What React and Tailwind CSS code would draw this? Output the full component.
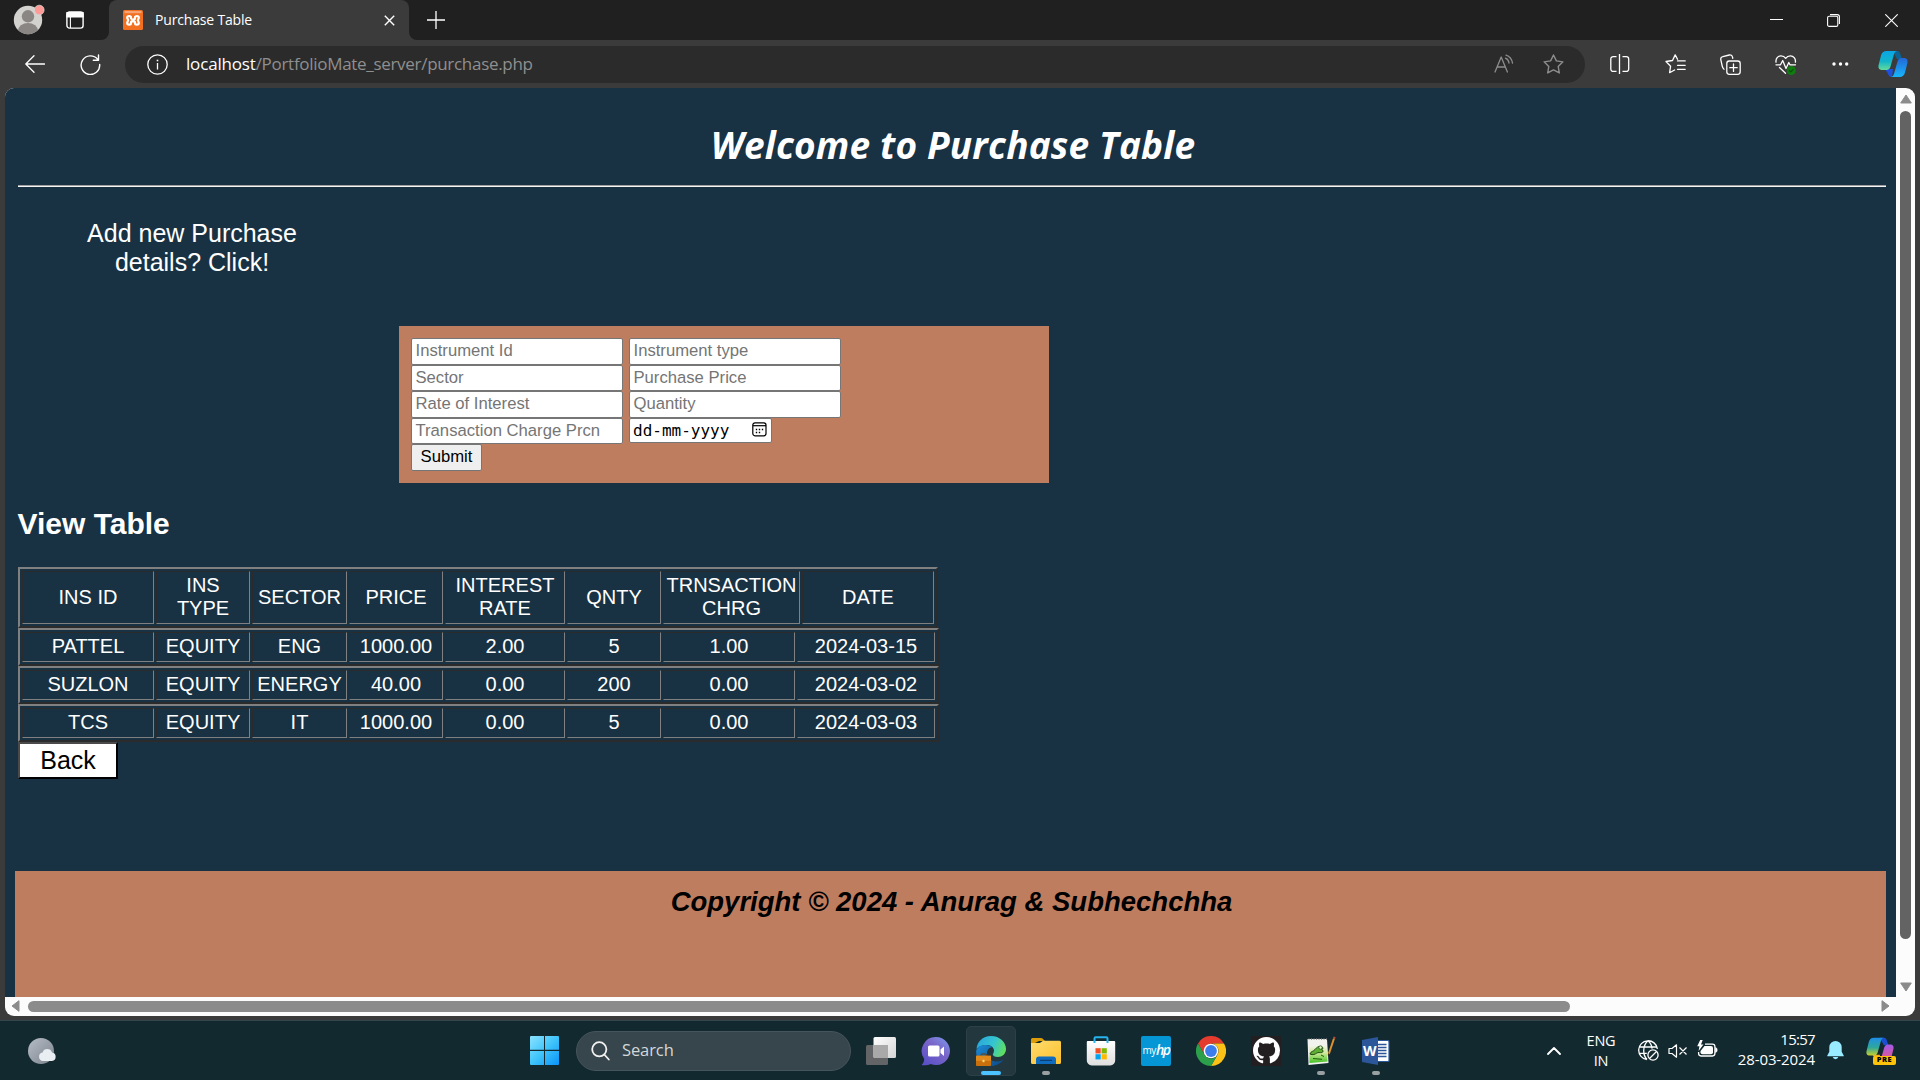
const UI = "font-['Open_Sans','Noto_Sans',sans-serif]";
const ARIAL = "font-['Liberation_Sans',Arial,sans-serif]";

function TabStrip() {
  return (
    <div className="flex h-10 bg-[#202020] text-white">
      <div className="flex h-10 w-[101px] items-center">
        <svg width="36" height="36" viewBox="0 0 36 36" className="ml-[12px] shrink-0">
          <defs>
            <clipPath id="avatar"><circle cx="16" cy="18" r="14.2" /></clipPath>
          </defs>
          <circle cx="16" cy="18" r="14.2" fill="#d4d2cf" />
          <g clipPath="url(#avatar)" fill="#8a8683">
            <circle cx="16" cy="14.3" r="6.2" />
            <path d="M6 36v-7a10 8 0 0 1 20 0v7z" />
          </g>
          <circle cx="27.3" cy="8" r="4.8" fill="#ff9a96" stroke="#d4d2cf" strokeWidth="0.8" />
        </svg>
        <svg width="18" height="18" viewBox="0 0 18 18" className="ml-[18px] shrink-0" fill="none" stroke="#fff" strokeWidth="1.4">
          <rect x="0.9" y="0.9" width="16.2" height="16.2" rx="2.6" />
          <path d="M1 1.6h16v4.2H1z" fill="#fff" />
          <path d="M4.4 6v11" strokeWidth="1.1" />
        </svg>
      </div>
      <div className="w-2 self-end bg-[#3b3b3b]">
        <div className="h-2 w-2 rounded-br-lg bg-[#202020]" />
      </div>
      <div className="flex h-10 w-[300px] items-center rounded-t-lg bg-[#3b3b3b]">
        <svg width="20" height="20" viewBox="0 0 20 20" className="ml-[14px] shrink-0">
          <rect width="20" height="20" rx="1.5" fill="#f37021" />
          <path d="M1.5 1h17v2.2h-17z" fill="#f7a577" />
          <path
            d="M8 8.200V7.400C8 5.600 4.200 5.400 4.200 7.600c0 1.300.9 1.700.9 2.700s-.9 1.400-.9 2.700c0 2.200 3.800 2 3.800.2v-.8c0-1.500 4-1.500 4 0v.8c0 1.800 3.800 2 3.800-.2 0-1.300-.9-1.700-.9-2.700s.9-1.400.9-2.700c0-2.200-3.800-2-3.800-.2v.8c0 1.400-1.500 1.300-3.200 1.300"
            fill="none"
            stroke="#fff"
            strokeWidth="2.200"
            strokeLinecap="round"
            strokeLinejoin="round"
          />
        </svg>
        <span className={UI + " ml-[12px] text-[14px] tracking-[-0.17px] leading-5"}>Purchase Table</span>
        <svg width="11" height="11" viewBox="0 0 11 11" className="ml-auto mr-[14px]" stroke="#fff" strokeWidth="1.400">
          <path d="M.8.8l9.400 9.400M10.200.8L.8 10.200" />
        </svg>
      </div>
      <div className="w-2 self-end bg-[#3b3b3b]">
        <div className="h-2 w-2 rounded-bl-lg bg-[#202020]" />
      </div>
      <svg width="18" height="18" viewBox="0 0 18 18" className="ml-[10px] mt-[10.500px]" stroke="#fff" strokeWidth="1.300">
        <path d="M0 9h18M9 0v18" />
      </svg>
      <div className="ml-auto flex items-center pr-[22px]">
        <svg width="13" height="2" viewBox="0 0 13 2"><path d="M0 .5h13" stroke="#fff" /></svg>
        <svg width="13" height="13" viewBox="0 0 13 13" className="ml-[44px]" fill="none" stroke="#fff" strokeWidth="1.100">
          <rect x=".6" y="2.200" width="10.200" height="10.200" rx="1.500" />
          <path d="M3 .6h7.200a2.200 2.200 0 0 1 2.200 2.200V10" />
        </svg>
        <svg width="13" height="13" viewBox="0 0 13 13" className="ml-[45px]" stroke="#fff" strokeWidth="1.100">
          <path d="M.3.3l12.400 12.400M12.700.3L.3 12.700" />
        </svg>
      </div>
    </div>
  );
}

function CopilotMark({ size = 30, pre = false }) {
  const a = pre ? "cp-a2" : "cp-a1";
  const b = pre ? "cp-b2" : "cp-b1";
  return (
    <svg width={size} height={size} viewBox="0 0 30 30" className="shrink-0">
      <defs>
        <linearGradient id={a} x1="0" y1="0" x2="0" y2="1">
          <stop offset="0" stopColor={pre ? "#1e8ee8" : "#0aa5e6"} />
          <stop offset=".55" stopColor={pre ? "#2fa89a" : "#13b5c9"} />
          <stop offset="1" stopColor={pre ? "#c9cf2a" : "#63db9a"} />
        </linearGradient>
        <linearGradient id={b} x1="0" y1="0" x2="0" y2="1">
          <stop offset="0" stopColor={pre ? "#a25bea" : "#2467d6"} />
          <stop offset="1" stopColor={pre ? "#f0567c" : "#17b6fb"} />
        </linearGradient>
      </defs>
      <path d="M15 2h4c2.500 0 3.200 2 4 5l1 3h-5z" fill={pre ? "#1b4fd0" : "#0a6496"} />
      <path d="M7 20h8l-1 8c-2 0-3.500-1-4.200-3.500z" fill={pre ? "#f5a623" : "#1e50e0"} />
      <path d="M8.500 2h11c-2 0-3 1.500-3.600 3.600l-3.400 12c-.6 2-1.800 3.400-4 3.400H4.200C1 21 0 18.800.6 16L3 6.500C3.800 3.600 5.500 2 8.500 2z" fill={"url(#" + a + ")"} />
      <path d="M21.500 28h-9c2 0 3-1.500 3.600-3.600l3.400-12c.6-2 1.800-3.400 4-3.400h2.300c3.200 0 4.200 2.200 3.600 5L27 23.500C26.200 26.400 24.500 28 21.500 28z" fill={"url(#" + b + ")"} />
    </svg>
  );
}

function Toolbar() {
  return (
    <div className="flex h-12 items-center bg-[#3b3b3b] text-white">
      <svg width="20" height="18" viewBox="0 0 20 18" fill="none" stroke="#fff" strokeWidth="1.300" strokeLinecap="round" strokeLinejoin="round" className="ml-[25px]">
        <path d="M19.500 9H.8M9 .8L.8 9 9 17.200" />
      </svg>
      <svg width="21" height="21" viewBox="0 0 21 21" fill="none" stroke="#fff" strokeWidth="1.400" strokeLinecap="round" strokeLinejoin="round" className="ml-[35px]">
        <path d="M17.700 5.400A9.300 9.300 0 1 0 19.700 10.500M18.500 1v5.200h-5.200" />
      </svg>
      <div className="ml-[24px] flex h-[37px] w-[1460px] items-center rounded-full bg-[#2b2b2b]">
        <svg width="21" height="21" viewBox="0 0 21 21" fill="none" stroke="#fff" strokeWidth="1.300" className="ml-[22px]">
          <circle cx="10.500" cy="10.500" r="9.700" />
          <path d="M10.500 9v6.500" />
          <path d="M10.500 5.700v1.600" strokeWidth="1.600" />
        </svg>
        <span className={UI + " ml-[18px] text-[17px] leading-6 text-[#8f8f8f]"}>
          <span className="tracking-[-0.17px] text-white">localhost</span>
          <span className="tracking-[-0.300px]">/PortfolioMate_server/purchase.php</span>
        </span>
        <svg width="21" height="19" viewBox="0 0 21 19" fill="none" stroke="#8d8d8d" strokeWidth="1.300" strokeLinecap="round" strokeLinejoin="round" className="mb-[2px] ml-auto mr-[28px]">
          <path d="M1 18L7.200 3l6.200 15M3 13h8.400M11.500 4.200q3 1.300 3.500 4.800M12 1.200q5.500 1.800 6.500 8" />
        </svg>
        <svg width="21" height="20" viewBox="0 0 21 20" fill="none" stroke="#8d8d8d" strokeWidth="1.400" strokeLinejoin="round" className="mr-[21px]">
          <path d="M10.500 1l2.900 5.900 6.500.95-4.700 4.600 1.100 6.500-5.800-3.100-5.800 3.100 1.100-6.500-4.700-4.600 6.500-.95z" />
        </svg>
      </div>
      <svg width="20" height="20" viewBox="0 0 20 20" fill="none" stroke="#fff" strokeWidth="1.300" className="ml-[25px]">
        <path d="M9.500 0v20M6.500 2.600H3.200a2.400 2.400 0 0 0-2.400 2.400v10a2.400 2.400 0 0 0 2.400 2.400h3.300M12.500 2.600h3.800a2.400 2.400 0 0 1 2.400 2.400v10a2.400 2.400 0 0 1-2.400 2.400h-3.800" />
      </svg>
      <svg width="21" height="20" viewBox="0 0 21 20" fill="none" stroke="#fff" strokeWidth="1.300" strokeLinecap="round" strokeLinejoin="round" className="ml-[35px]">
        <path d="M12.500 5.200L10.200.9 7.500 6.500l-6.500 1 4.600 4.700-1 6.500 5-2.700M12.500 6.900h7.700M12.500 11.300h7.700M12.500 15.300h7.700" />
      </svg>
      <svg width="21" height="21" viewBox="0 0 21 21" fill="none" stroke="#fff" strokeWidth="1.300" strokeLinecap="round" strokeLinejoin="round" className="ml-[34px]">
        <rect x="6.800" y="7" width="13.400" height="13.300" rx="2.500" />
        <path d="M13.500 10v7.400M9.800 13.700h7.400M4 15.200C3 14.500 2.500 13.500 2.200 12L.8 5.600a2.600 2.600 0 0 1 2-3L9.300 1a2.600 2.600 0 0 1 3.200 2l.3 1.300" />
      </svg>
      <svg width="22" height="21" viewBox="0 0 22 21" fill="none" stroke="#fff" strokeWidth="1.300" strokeLinecap="round" strokeLinejoin="round" className="ml-[34px]">
        <path d="M1 8.200C.5 4.500 3 1.800 6 1.800c2.200 0 3.700 1 4.700 2.500 1-1.500 2.500-2.500 4.700-2.500 3 0 5.500 2.700 5 6.400M1 10.800h4.500l2.200-4.300 3.300 8 2.800-6 1.200 2.300h5.500M4.500 13.500l6 5.800" />
        <circle cx="16.300" cy="16.500" r="4.500" fill="#107c10" stroke="none" />
        <path d="M14.400 16.600l1.400 1.300 2.400-2.500" stroke="#0a4d0a" strokeWidth="1.100" />
      </svg>
      <svg width="17" height="4" viewBox="0 0 17 4" fill="#fff" className="ml-[35px]">
        <circle cx="2" cy="2" r="1.700" /><circle cx="8.500" cy="2" r="1.700" /><circle cx="14.700" cy="2" r="1.700" />
      </svg>
      <div className="ml-[29px]"><CopilotMark /></div>
    </div>
  );
}

const FIELDS = [
  ["Instrument Id", "Instrument type"],
  ["Sector", "Purchase Price"],
  ["Rate of Interest", "Quantity"],
];

function Field({ label }) {
  return (
    <div className="h-[26.500px] w-[212px] rounded-[2px] border border-[#767676] bg-white pl-[3.500px] text-[16.667px] leading-[23px] text-[#757575]">
      {label}
    </div>
  );
}

function PurchaseForm() {
  return (
    <div className="ml-[381px] mt-[49px] flex h-[157px] w-[650px] flex-col bg-[#bf7d5f] pl-[12px] pt-[12px]">
      {FIELDS.map(([a, b]) => (
        <div key={a} className="flex gap-[6px]"><Field label={a} /><Field label={b} /></div>
      ))}
      <div className="flex gap-[6px]">
        <Field label="Transaction Charge Prcn" />
        <div className="flex h-[25px] w-[143px] items-center rounded-[2px] border border-[#767676] bg-white pl-[3px] pt-px font-['DejaVu_Sans_Mono',monospace] text-[16px] leading-[22px] text-black">
          dd-mm-yyyy
          <svg width="15" height="15" viewBox="0 0 15 15" fill="none" stroke="#000" strokeWidth="1.200" className="mb-[2px] ml-auto mr-[4.500px]">
            <rect x=".8" y=".8" width="13.200" height="13" rx="2.200" />
            <path d="M1 3.700h13" />
            <path d="M3.800 7.500h1.400M6.800 7.500h1.400M9.800 7.500h1.400M3.800 10.500h1.400M6.800 10.500h1.400" strokeWidth="1.400" />
          </svg>
        </div>
      </div>
      <div className="flex h-[27px] w-[71px] justify-center rounded-[2px] border border-[#767676] bg-[#efefef] text-[16.667px] leading-[23px] text-black">Submit</div>
    </div>
  );
}

const ROWS = [
  ["PATTEL", "EQUITY", "ENG", "1000.00", "2.00", "5", "1.00", "2024-03-15"],
  ["SUZLON", "EQUITY", "ENERGY", "40.00", "0.00", "200", "0.00", "2024-03-02"],
  ["TCS", "EQUITY", "IT", "1000.00", "0.00", "5", "0.00", "2024-03-03"],
];
const HEAD = ["INS ID", "INS\nTYPE", "SECTOR", "PRICE", "INTEREST\nRATE", "QNTY", "TRNSACTION\nCHRG", "DATE"];
const HEAD_GRID = "grid-cols-[132px_94px_95px_94px_120px_94px_137px_132px] w-[920px]";
const BODY_GRID = "grid-cols-[132px_94px_95px_94px_120px_94px_132px_138px] w-[921px]";

function RowTable({ cells, grid, head }) {
  return (
    <div className={"grid gap-[2px] border-2 border-b-[#2b2b2b] border-l-[#808080] border-r-[#2b2b2b] border-t-[#808080] p-[2px] " + grid}>
      {cells.map((c, i) => (
        <div
          key={i}
          className={
            "flex items-center justify-center whitespace-pre border border-b-[#808080] border-l-[#2b2b2b] border-r-[#808080] border-t-[#2b2b2b] text-center text-[20px] leading-[23px] " +
            (head ? (c.includes("\n") ? "h-[53px] pb-px" : "h-[53px]") : "h-[30px] pb-px")
          }
        >
          {c}
        </div>
      ))}
    </div>
  );
}

function Page() {
  return (
    <div className={ARIAL + " h-[909px] w-[1891px] overflow-hidden bg-[#183244] text-white"}>
      <div className="ml-[13px] w-[1868px]">
        <h1 className="mt-[35px] pl-[2px] text-center font-['Open_Sans',sans-serif] text-[37px] font-bold italic leading-[44px] tracking-[0.180px]">
          Welcome to Purchase Table
        </h1>
        <div className="mt-[18px] h-[2px] border-b border-t border-b-[#f5f5f5] border-t-[#a0a0a0]" />
        <div className="ml-[44px] mt-[32px] w-[260px] text-center text-[25px] leading-[29px]">
          Add new Purchase<br />details? Click!
        </div>
        <PurchaseForm />
        <h2 className="-ml-[0.500px] mt-[24px] text-[30px] font-bold leading-[34px]">View Table</h2>
        <div className="mt-[26px]">
          <RowTable cells={HEAD} grid={HEAD_GRID} head />
          {ROWS.map((r) => <RowTable key={r[0]} cells={r} grid={BODY_GRID} />)}
        </div>
        <div className="flex h-[37px] w-[100px] items-center justify-center border-2 border-b-black border-l-[#4a4a4a] border-r-black border-t-[#4a4a4a] bg-white pb-px text-[25px] leading-[29px] text-black">
          Back
        </div>
      </div>
      <div className="ml-[10px] mt-[92px] h-[126px] w-[1871px] bg-[#bf7d5f] pl-[2px] pt-[15px] text-center text-[27.500px] font-bold italic leading-[32px] text-black">
        Copyright © 2024 - Anurag &amp; Subhechchha
      </div>
    </div>
  );
}

function Arrow({ d, w, h, className = "" }) {
  return (
    <svg width={w} height={h} viewBox={"0 0 " + w + " " + h} className={"shrink-0 " + className}>
      <path d={d} fill="#8b8b8b" stroke="#8b8b8b" strokeWidth="1" strokeLinejoin="round" />
    </svg>
  );
}

function Viewport() {
  return (
    <div className="h-[932px] bg-[#3b3b3b] pl-[5px]">
      <div className="h-[928px] w-[1910px] overflow-hidden rounded-[9px] bg-[#fcfcfc]">
        <div className="flex">
          <Page />
          <div className="flex w-[19px] flex-col items-center">
            <Arrow w={12} h={10} d="M6 1L11.300 9H.7z" className="mt-[6px]" />
            <div className="mt-[7px] h-[828px] w-[11px] rounded-full bg-[#636363]" />
            <Arrow w={12} h={10} d="M6 9L11.300 1H.7z" className="mt-[43px]" />
          </div>
        </div>
        <div className="flex h-[19px] items-center pb-px">
          <Arrow w={9} h={12} d="M1 6L8 .7v10.600z" className="ml-[6px]" />
          <div className="ml-[8px] h-[11px] w-[1542px] rounded-full bg-[#8b8b8b]" />
          <Arrow w={9} h={12} d="M8 6L1 .7v10.600z" className="ml-[311px]" />
        </div>
      </div>
    </div>
  );
}

function TaskItem({ children, active, dot }) {
  return (
    <div className={"flex h-[50px] w-[50px] shrink-0 flex-col items-center rounded-[5px] " + (active ? "border border-[#2d4047] bg-[#22373e] pt-[9px]" : "pt-[10px]")}>
      <div className="flex h-[30px] items-center justify-center">{children}</div>
      {active && <div className="mt-[5px] h-[4px] w-[20px] shrink-0 rounded-full bg-[#4cc2ff]" />}
      {dot && <div className="mt-[5px] h-[4px] w-[8px] shrink-0 rounded-full bg-[#9a9fa1]" />}
    </div>
  );
}

function Taskbar() {
  return (
    <div className={UI + " flex h-[60px] items-center border-t border-[#34454b] bg-[#12292f] text-white"}>
      <svg width="30" height="28" viewBox="0 0 30 28" className="ml-[27px] shrink-0">
        <defs>
          <linearGradient id="moon" x1="0" y1="0" x2="1" y2="1"><stop stopColor="#b7bdc6" /><stop offset="1" stopColor="#7c838d" /></linearGradient>
        </defs>
        <circle cx="14" cy="14" r="13" fill="url(#moon)" />
        <path d="M16 24a4.300 4.300 0 0 1-.5-8.500 5 5 0 0 1 9.500 0 4.300 4.300 0 0 1 0 8.500z" fill="#e9eef2" />
      </svg>
      <svg width="29" height="29" viewBox="0 0 29 29" className="ml-[473px] shrink-0">
        <defs>
          <linearGradient id="win" x1="0" y1="0" x2="1" y2="1"><stop stopColor="#8be3ff" /><stop offset=".5" stopColor="#3fc4fb" /><stop offset="1" stopColor="#0a93fa" /></linearGradient>
        </defs>
        <path d="M1 0h13v13.700H0V1a1 1 0 0 1 1-1zM15 0h13a1 1 0 0 1 1 1v12.700H15zM0 15h14v14H1a1 1 0 0 1-1-1zM15 15h14v13a1 1 0 0 1-1 1H15z" fill="url(#win)" />
      </svg>
      <div className="ml-[17px] flex h-10 w-[275px] shrink-0 items-center rounded-full border border-[#45555b] bg-[#36464c]">
        <svg width="19" height="20" viewBox="0 0 19 20" fill="none" stroke="#f1f1f1" strokeWidth="1.800" strokeLinecap="round" className="ml-[14px]">
          <circle cx="8.300" cy="8.300" r="7.100" /><path d="M13.300 13.500l4.500 5" />
        </svg>
        <span className="ml-[12px] text-[16.500px] tracking-[-0.1px] text-[#d3d7d9]">Search</span>
      </div>
      <div className="ml-[5px] flex shrink-0 gap-[5px]">
        <TaskItem>
          <svg width="30" height="28" viewBox="0 0 30 28">
            <defs>
              <linearGradient id="tv" x1="0" y1="0" x2="1" y2="1"><stop stopColor="#fff" /><stop offset="1" stopColor="#d4d4d4" /></linearGradient>
            </defs>
            <rect x="0" y="8" width="22" height="20" rx="1.500" fill="#636465" />
            <rect x="7.500" y="0" width="22.500" height="21" rx="1.500" fill="url(#tv)" />
            <path d="M7.500 8H22v13H9a1.500 1.500 0 0 1-1.500-1.500z" fill="#a9a9a9" />
          </svg>
        </TaskItem>
        <TaskItem>
          <svg width="30" height="30" viewBox="0 0 30 30">
            <defs>
              <linearGradient id="chat" x1="1" y1="0" x2=".2" y2="1"><stop stopColor="#7b9cf0" /><stop offset=".45" stopColor="#7a66c8" /><stop offset="1" stopColor="#5b50c6" /></linearGradient>
            </defs>
            <path d="M15 1a14 14 0 1 1-5.500 26.900C7 29.300 3 29.500 1.300 29.200c-.6-.1-.5-.7-.1-1C2.500 27 3 25.500 3.200 23A14 14 0 0 1 15 1z" fill="url(#chat)" />
            <rect x="7" y="9.500" width="11.500" height="11" rx="1.500" fill="#fff" />
            <path d="M19.500 13.500l3.500-3v9.500l-3.500-3z" fill="#fff" />
          </svg>
        </TaskItem>
        <TaskItem active>
          <svg width="30" height="30" viewBox="0 0 30 30">
            <defs>
              <linearGradient id="edgeTop" x1="0" y1=".3" x2="1" y2=".6"><stop stopColor="#29a7dc" /><stop offset=".55" stopColor="#35c5d0" /><stop offset="1" stopColor="#62e05a" /></linearGradient>
              <linearGradient id="edgeLow" x1="0" y1="0" x2="1" y2="1"><stop stopColor="#1b8ed8" /><stop offset="1" stopColor="#0c4686" /></linearGradient>
            </defs>
            <path d="M.5 13C1 6 6.500 0 15 0c9 0 15 6.500 15 13 0 5-4 8-8 8-3.500 0-5.200-1.500-5.200-2.500 0-.8 1.200-1.500 1.200-4 0-3-3-5.500-7-5.500C6 9 2 11 .5 13z" fill="url(#edgeTop)" />
            <path d="M.2 15C1 11 5 9 9.500 9c3 0 5 .8 6.500 2.200-3 0-5 3-5 6 0 5 4.500 8.300 9.500 8.300 3.200 0 5.500-1 7-2C25 27.500 20 30 15 30 6 30-.5 23 .2 15z" fill="url(#edgeLow)" />
            <rect x="5" y="18" width="5.500" height="3" rx="1" fill="none" stroke="#6f3a05" strokeWidth="1" />
            <rect x="0" y="19.700" width="15" height="10.300" rx=".8" fill="#c96f0b" />
            <path d="M0 19.700h15v5.100H0z" fill="#e08a1b" />
            <rect x="6.500" y="23.800" width="2" height="2.400" fill="#ffd67a" />
          </svg>
        </TaskItem>
        <TaskItem dot>
          <svg width="30" height="28" viewBox="0 0 30 28">
            <defs>
              <linearGradient id="folder" x1="0" y1="0" x2="1" y2="1"><stop stopColor="#ffdc6e" /><stop offset="1" stopColor="#fbc02d" /></linearGradient>
            </defs>
            <path d="M0 2.500A1.500 1.500 0 0 1 1.500 1H10a2 2 0 0 1 1.500.6L14 4H8L0 8z" fill="#dd9c0a" />
            <path d="M0 6h8.500c1.800 0 2.500-2.200 4.500-2.200h15.500A1.500 1.500 0 0 1 30 5.300v20.200a1.500 1.500 0 0 1-1.500 1.500h-27A1.500 1.500 0 0 1 0 25.500z" fill="url(#folder)" />
            <path d="M5 27v-4.500a3 3 0 0 1 3-3h14a3 3 0 0 1 3 3V27z" fill="#0f6cbf" />
            <path d="M9.500 23.400h11" stroke="#0a3f78" strokeWidth="1.300" strokeLinecap="round" />
          </svg>
        </TaskItem>
        <TaskItem>
          <svg width="30" height="30" viewBox="0 0 30 30">
            <defs>
              <linearGradient id="bag" x1="0" y1="0" x2="0" y2="1"><stop stopColor="#fff" /><stop offset="1" stopColor="#dedede" /></linearGradient>
            </defs>
            <path d="M.8 6a1 1 0 0 1 1-1h26.400a1 1 0 0 1 1 1v18a5 5 0 0 1-5 5.500H5.800a5 5 0 0 1-5-5.500z" fill="url(#bag)" />
            <path d="M8.500 7V2.500a1.200 1.200 0 0 1 1.200-1.200h10.600a1.200 1.200 0 0 1 1.200 1.200V7" fill="none" stroke="#27b3ee" strokeWidth="2" />
            <path d="M9.500 12.200h5.200v5.200H9.500z" fill="#f25022" />
            <path d="M15.600 12.200h5.200v5.200h-5.200z" fill="#7fba00" />
            <path d="M9.500 18.200h5.200v5.200H9.500z" fill="#00a4ef" />
            <path d="M15.600 18.200h5.200v5.200h-5.200z" fill="#ffb900" />
          </svg>
        </TaskItem>
        <TaskItem>
          <div className="flex h-[30px] w-[30px] items-center justify-center rounded-[2px] bg-[#0596d6] pb-px leading-none text-white">
            <span className="text-[10px] font-medium tracking-[-0.5px]">my</span>
            <span className="text-[14px] font-semibold italic tracking-[-1.500px]">hp</span>
          </div>
        </TaskItem>
        <TaskItem>
          <svg width="30" height="30" viewBox="0 0 30 30">
            <path d="M2 7.500A15 15 0 0 1 28 7.500H15L8.500 18.700z" fill="#e33b2e" />
            <path d="M28 7.500A15 15 0 0 1 15 30l6.500-11.300A7.500 7.500 0 0 0 15 7.500z" fill="#fbc116" />
            <path d="M15 30A15 15 0 0 1 2 7.500l6.500 11.300A7.500 7.500 0 0 0 21.500 18.700z" fill="#2c9f4b" />
            <circle cx="15" cy="15" r="7.300" fill="#fff" />
            <circle cx="15" cy="15" r="5.900" fill="#3b7ded" />
          </svg>
        </TaskItem>
        <TaskItem>
          <div className="flex h-[30px] w-[30px] items-center justify-center bg-[#231f20]">
            <svg width="27" height="27" viewBox="0 0 16 16" fill="#fff">
              <path d="M8 0C3.580 0 0 3.580 0 8c0 3.540 2.290 6.530 5.470 7.590.4.070.55-.17.55-.38 0-.19-.01-.82-.01-1.490-2.010.37-2.530-.49-2.690-.94-.09-.23-.48-.94-.82-1.130-.28-.15-.68-.52-.01-.53.63-.01 1.080.58 1.230.82.72 1.210 1.870.87 2.330.66.07-.52.28-.87.51-1.070-1.780-.2-3.640-.89-3.640-3.950 0-.87.31-1.590.82-2.150-.08-.2-.36-1.020.08-2.120 0 0 .67-.21 2.200.82.64-.18 1.320-.27 2-.27s1.360.09 2 .27c1.530-1.040 2.200-.82 2.200-.82.44 1.100.16 1.920.08 2.120.51.56.82 1.270.82 2.150 0 3.070-1.870 3.750-3.650 3.950.29.25.54.73.54 1.480 0 1.070-.01 1.930-.01 2.200 0 .21.15.46.55.38A8.010 8.010 0 0 0 16 8c0-4.420-3.580-8-8-8z" />
            </svg>
          </div>
        </TaskItem>
        <TaskItem dot>
          <svg width="30" height="30" viewBox="0 0 30 30">
            <defs>
              <linearGradient id="npp" x1="0" y1="0" x2="0" y2="1"><stop stopColor="#f4f6ee" /><stop offset=".45" stopColor="#cfe89a" /><stop offset="1" stopColor="#3fc21e" /></linearGradient>
            </defs>
            <path d="M1.500 3H21l1.500 24L2.500 29z" fill="#f2f2ee" />
            <path d="M3 9h17.500l1 16.500L3.500 27z" fill="url(#npp)" />
            <path d="M2.500 3h19" stroke="#777" strokeWidth="1.600" strokeDasharray="1 1.500" />
            <path d="M4 18c1-3 3.500-2.500 5-4.500s3.500-3.500 6-3c2 .4 2.500 2 .8 3.200 1.800.6 1.700 2.300 0 2.800-2 .5-3.500-.5-5 .6-1.500 1-4 2.400-6.800.9z" fill="#5fae34" stroke="#1f4d12" strokeWidth="1" />
            <circle cx="14.500" cy="11.500" r="1.700" fill="#dff3c4" stroke="#1f4d12" strokeWidth=".7" />
            <path d="M7 22.500l9 .8M15 19l3 1.500" stroke="#225b12" />
            <path d="M28 2.500L22.800 18" stroke="#e0922a" strokeWidth="2" />
            <path d="M28.600.8l-.6 1.800" stroke="#c14a36" strokeWidth="2.200" />
            <path d="M22.800 17.500l-.6 2" stroke="#3a2a18" strokeWidth="1.200" />
          </svg>
        </TaskItem>
        <TaskItem dot>
          <svg width="28" height="28" viewBox="0 0 28 28">
            <rect x="13" y="3.500" width="14" height="21" rx="1" fill="#fff" stroke="#2b579a" strokeWidth="1.200" />
            <path d="M16 7.500h8.500M16 10.500h8.500M16 13.500h8.500M16 16.500h8.500M16 19.500h8.500" stroke="#2b579a" strokeWidth="1.400" />
            <path d="M0 3L16 0v28L0 25z" fill="#2b579a" />
            <text x="7.800" y="19" textAnchor="middle" fontFamily="Open Sans" fontSize="14" fontWeight="700" fill="#fff">W</text>
          </svg>
        </TaskItem>
      </div>
      <svg width="14" height="8" viewBox="0 0 14 8" fill="none" stroke="#fff" strokeWidth="1.800" strokeLinecap="round" strokeLinejoin="round" className="ml-auto shrink-0">
        <path d="M1 7l6-6 6 6" />
      </svg>
      <div className="ml-[24px] w-[32px] shrink-0 text-center text-[14.500px] leading-[20px] tracking-[-0.2px]">ENG<br />IN</div>
      <svg width="21" height="21" viewBox="0 0 21 21" fill="none" stroke="#fff" strokeWidth="1.300" className="ml-[21px] shrink-0">
        <path d="M19.400 8.800A9.400 9.400 0 1 0 9 19.500M1.300 7h17.200M1.300 13.300h7.500M10 .8C4.500 5.500 4.500 15 9 19.500M10 .8c2.400 2 3.800 4.700 4.100 7.800" />
        <circle cx="15" cy="15" r="5.100" /><path d="M11.500 18.500l7-7" />
      </svg>
      <svg width="20" height="14" viewBox="0 0 20 14" fill="none" stroke="#fff" strokeWidth="1.200" strokeLinejoin="round" className="ml-[9px] shrink-0">
        <path d="M1 4.500h3L8.500.8v12.400L4 9.500H1zM11.500 3.500l7 7M18.500 3.500l-7 7" />
      </svg>
      <svg width="21" height="18" viewBox="0 0 21 18" fill="none" stroke="#fff" strokeWidth="1.300" strokeLinejoin="round" className="mb-[3px] ml-[9px] shrink-0">
        <path d="M8 4.200h7.500a2.400 2.400 0 0 1 2.400 2.400v7a2.400 2.400 0 0 1-2.400 2.400H4a2.400 2.400 0 0 1-2.400-2.400V12" />
        <path d="M7.500 6h6.500a2 2 0 0 1 2 2v4.200a2 2 0 0 1-2 2H5.500a2 2 0 0 1-2-2V11z" fill="#fff" stroke="none" />
        <path d="M18.500 7.500q1.700.3 1.700 2.500t-1.700 2.500z" fill="#fff" strokeWidth=".6" />
        <path d="M3.200 0L.2 6.300h2.200L1.600 11l4.800-6.500H4L5.700 0z" fill="#fff" stroke="none" />
      </svg>
      <div className="mb-[4px] ml-[19px] w-[78px] shrink-0 text-right text-[15px] leading-[20px]">
        <div className="tracking-[-0.700px]">15:57</div>
        <div className="tracking-[-0.1px]">28-03-2024</div>
      </div>
      <svg width="17" height="19" viewBox="0 0 17 19" fill="#99ebff" className="ml-[12px] shrink-0">
        <path d="M8.500 0a6.200 6.200 0 0 1 6.200 6.200v4.600l2 3.600c.2.500 0 .9-.5.9H.8c-.5 0-.7-.4-.5-.9l2-3.600V6.200A6.200 6.200 0 0 1 8.500 0zM5.700 16h5.600a2.900 2.900 0 0 1-5.600 0z" />
      </svg>
      <div className="relative ml-[22px] mr-[24px] h-[30px] w-[30px] shrink-0">
        <CopilotMark size={28} pre />
        <div className="absolute left-[7px] top-[20px] flex h-[9px] w-[23px] items-center justify-center rounded-[2px] bg-[#ffc20a] text-[7.500px] font-extrabold leading-none tracking-[0.5px] text-black">PRE</div>
      </div>
    </div>
  );
}

export default function App() {
  return (
    <div className="h-[1080px] w-[1920px] overflow-hidden bg-[#3b3b3b]">
      <TabStrip />
      <Toolbar />
      <Viewport />
      <Taskbar />
    </div>
  );
}
